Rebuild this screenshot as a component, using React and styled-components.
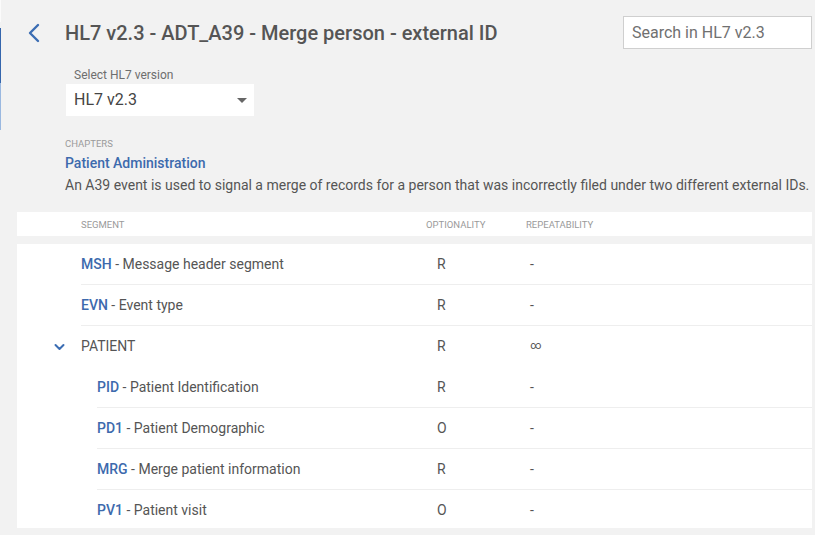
import styled, { createGlobalStyle } from "styled-components";

const GlobalStyle = createGlobalStyle`
  html, body {
    margin: 0;
    padding: 0;
    background: #f2f2f2;
    font-family: Roboto, "Liberation Sans", sans-serif;
  }
`;

const segments = [
  { code: "MSH", name: "Message header segment", opt: "R", rep: "-", level: 0 },
  { code: "EVN", name: "Event type", opt: "R", rep: "-", level: 0 },
  { group: "PATIENT", opt: "R", rep: "∞", level: 0 },
  { code: "PID", name: "Patient Identification", opt: "R", rep: "-", level: 1 },
  { code: "PD1", name: "Patient Demographic", opt: "O", rep: "-", level: 1 },
  { code: "MRG", name: "Merge patient information", opt: "R", rep: "-", level: 1 },
  { code: "PV1", name: "Patient visit", opt: "O", rep: "-", level: 1, last: true },
];

function BackIcon() {
  return (
    <svg width="14" height="20" viewBox="0 0 14 20">
      <path d="M11 2 L3 10 L11 18" fill="none" stroke="#3b6db3" strokeWidth="2.4" strokeLinecap="round" strokeLinejoin="round" />
    </svg>
  );
}

function ChevronDown() {
  return (
    <svg width="11" height="8" viewBox="0 0 11 8">
      <path d="M1.5 2 L5.5 6 L9.5 2" fill="none" stroke="#3b6db3" strokeWidth="2" strokeLinecap="round" strokeLinejoin="round" />
    </svg>
  );
}

function App() {
  return (
    <Page>
      <GlobalStyle />
      <SideStrip>
        <StripPart $h={22} $c="#fbfbfb" />
        <StripPart $h={6} $c="#f2f2f2" />
        <StripPart $h={55} $c="#3566ad" />
        <StripPart $h={47} $c="#9ab8e0" />
      </SideStrip>
      <Main>
        <Header>
          <BackButton>
            <BackIcon />
          </BackButton>
          <Title>HL7 v2.3 - ADT_A39 - Merge person - external ID</Title>
          <Search placeholder="Search in HL7 v2.3" />
        </Header>

        <VersionBlock>
          <SelectLabel>Select HL7 version</SelectLabel>
          <SelectBox>
            <span>HL7 v2.3</span>
            <Caret />
          </SelectBox>
        </VersionBlock>

        <ChapterBlock>
          <SmallCaps>CHAPTERS</SmallCaps>
          <ChapterLink>Patient Administration</ChapterLink>
          <Description>
            An A39 event is used to signal a merge of records for a person that was incorrectly filed under two different external IDs.
          </Description>
        </ChapterBlock>

        <HeadPanel>
          <Gutter $w={64} />
          <HeadCells $indent={0}>
            <HeadCell>SEGMENT</HeadCell>
            <HeadCell>OPTIONALITY</HeadCell>
            <HeadCell>REPEATABILITY</HeadCell>
          </HeadCells>
        </HeadPanel>

        <Body>
          {segments.map((s, i) => (
            <Row key={i}>
              <Gutter $w={64 + s.level * 16}>
                {s.group && <ChevronDown />}
              </Gutter>
              <Cells $indent={s.level * 16} $line={!s.group && !s.last}>
                <SegCell>
                  {s.group ? (
                    <GroupName>{s.group}</GroupName>
                  ) : (
                    <>
                      <Code>{s.code}</Code> - {s.name}
                    </>
                  )}
                </SegCell>
                <OptCell>{s.opt}</OptCell>
                <RepCell $small={s.rep === "∞"}>{s.rep}</RepCell>
              </Cells>
            </Row>
          ))}
        </Body>
      </Main>
    </Page>
  );
}

const Page = styled.div`
  display: flex;
  width: 815px;
  height: 535px;
  overflow: hidden;
  background: #f2f2f2;
`;

const SideStrip = styled.div`
  width: 1px;
  display: flex;
  flex-direction: column;
`;

const StripPart = styled.div`
  height: ${(p) => p.$h}px;
  background: ${(p) => p.$c};
`;

const Main = styled.div`
  flex: 1;
  padding: 16px 3px 0 16px;
  display: flex;
  flex-direction: column;
`;

const Header = styled.div`
  display: flex;
  align-items: center;
  height: 33px;
`;

const BackButton = styled.div`
  width: 48px;
  padding-left: 10px;
  display: flex;
  align-items: center;
  box-sizing: border-box;
`;

const Title = styled.h1`
  margin: 0;
  flex: 1;
  font-size: 20px;
  font-weight: 500;
  color: #555;
  letter-spacing: 0;
`;

const Search = styled.input`
  width: 189px;
  height: 33px;
  box-sizing: border-box;
  border: 1px solid #cfcfcf;
  background: #fff;
  padding: 0 8px;
  font-family: Roboto, "Liberation Sans", sans-serif;
  font-size: 16px;
  color: #555;
  outline: none;

  &::placeholder {
    color: #707070;
  }
`;

const VersionBlock = styled.div`
  margin: 19px 0 0 49px;
  display: flex;
  flex-direction: column;
`;

const SelectLabel = styled.div`
  font-size: 12px;
  color: #6e6e6e;
  padding-left: 8px;
  line-height: 14px;
  margin-bottom: 2px;
`;

const SelectBox = styled.div`
  width: 188px;
  height: 32px;
  box-sizing: border-box;
  background: #fff;
  display: flex;
  align-items: center;
  justify-content: space-between;
  padding: 0 7px 1px 8px;
  font-size: 16px;
  color: #444;
`;

const Caret = styled.span`
  width: 0;
  height: 0;
  margin-top: 1px;
  border-left: 5px solid transparent;
  border-right: 5px solid transparent;
  border-top: 5px solid #666;
`;

const ChapterBlock = styled.div`
  margin: 21px 0 0 48px;
  display: flex;
  flex-direction: column;
`;

const SmallCaps = styled.div`
  font-size: 9.5px;
  color: #9a9a9a;
  line-height: 14px;
`;

const ChapterLink = styled.div`
  font-size: 14px;
  font-weight: 500;
  color: #3d6aad;
  line-height: 20px;
  margin-top: 2px;
`;

const Description = styled.div`
  font-size: 14px;
  color: #555;
  line-height: 20px;
  margin-top: 2px;
  white-space: nowrap;
`;

const HeadPanel = styled.div`
  margin-top: 17px;
  background: #fff;
  display: flex;
  height: 24px;
  align-items: center;
`;

const Gutter = styled.div`
  width: ${(p) => p.$w}px;
  flex-shrink: 0;
  display: flex;
  justify-content: flex-end;
  align-items: center;
  padding-right: 16px;
  box-sizing: border-box;
`;

const HeadCells = styled.div`
  flex: 1;
  display: grid;
  grid-template-columns: ${(p) => 345 - p.$indent}px 100px 1fr;
`;

const HeadCell = styled.div`
  font-size: 9.5px;
  color: #9a9a9a;
`;

const Body = styled.div`
  margin-top: 8px;
  background: #fff;
  display: flex;
  flex-direction: column;
  height: 284px;
`;

const Row = styled.div`
  display: flex;
  align-items: stretch;
`;

const Cells = styled.div`
  flex: 1;
  height: 41px;
  box-sizing: border-box;
  display: grid;
  grid-template-columns: ${(p) => 345 - p.$indent}px 100px 1fr;
  align-items: center;
  padding-bottom: 1px;
  border-bottom: 1px solid ${(p) => (p.$line ? "#eeeeee" : "transparent")};
  font-size: 14px;
  color: #555;
`;

const SegCell = styled.div`
  white-space: nowrap;
`;

const Code = styled.span`
  font-weight: 500;
  color: #3d6aad;
`;

const GroupName = styled.span`
  color: #555;
`;

const OptCell = styled.div`
  padding-left: 11px;
`;

const RepCell = styled.div`
  padding-left: 4px;
  font-size: ${(p) => (p.$small ? "11px" : "14px")};
`;

export default App;
